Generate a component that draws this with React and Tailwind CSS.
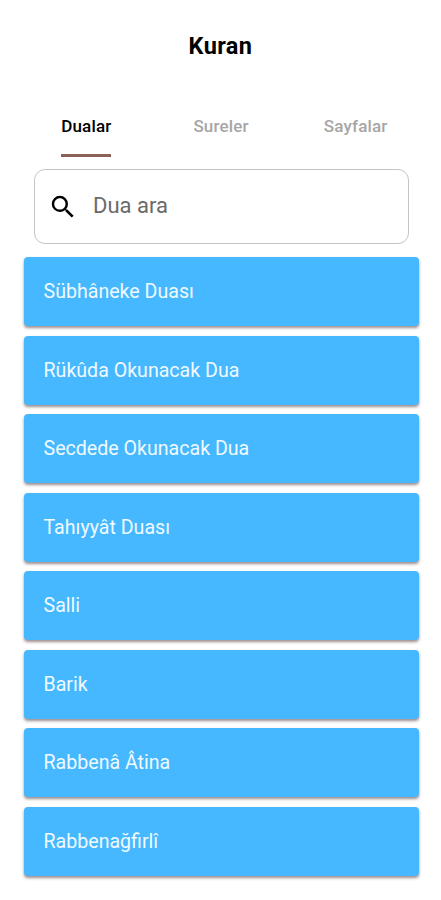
import React from "react";
import { MdSearch } from "react-icons/md";

const tabs = ["Dualar", "Sureler", "Sayfalar"];

const prayers = [
  "Sübhâneke Duası",
  "Rükûda Okunacak Dua",
  "Secdede Okunacak Dua",
  "Tahıyyât Duası",
  "Salli",
  "Barik",
  "Rabbenâ Âtina",
  "Rabbenağfirlî",
];

const App = () => {
  const activeTab = "Dualar";

  return (
    <div className="w-full h-[900px] overflow-hidden bg-white font-['Roboto',sans-serif]">
      {/* Title */}
      <header className="h-[96px] pt-[30px] text-center">
        <h1 className="text-[23.5px] leading-[32px] font-bold tracking-[0.4px] text-black">Kuran</h1>
      </header>

      {/* Tabs */}
      <nav className="flex h-[61px] pl-[19px] pr-[18px]">
        {tabs.map((tab) => (
          <button key={tab} className="flex-1 flex justify-center">
            <span
              className={`h-[61px] pt-[18px] text-[17px] leading-[24px] font-medium tracking-[0.15px] border-b-[3px] ${
                tab === activeTab ? "text-black border-[#8a6058]" : "text-[#a6a6a6] border-transparent"
              }`}
            >
              {tab}
            </span>
          </button>
        ))}
      </nav>

      {/* Search */}
      <div className="mt-[12px] ml-[34px] w-[375px] h-[75px] flex items-center border-[1.5px] border-[#c4c4c4] rounded-[11px]">
        <MdSearch className="ml-[13px] size-[30px] text-black" />
        <span className="ml-[15px] -mt-[3px] text-[22px] text-[#6a6a6a]">Dua ara</span>
      </div>

      {/* Prayer list */}
      <ul className="mt-[13px] ml-[24px] w-[395px] flex flex-col gap-[9.5px]">
        {prayers.map((prayer) => (
          <li
            key={prayer}
            className="h-[69px] shrink-0 flex items-center pt-px pl-[19.5px] rounded-[4px] bg-[#45b8ff] text-[#f0faff] text-[19.6px] shadow-[0_2px_3px_rgba(60,30,30,0.5)]"
          >
            {prayer}
          </li>
        ))}
      </ul>
    </div>
  );
};

export default App;
